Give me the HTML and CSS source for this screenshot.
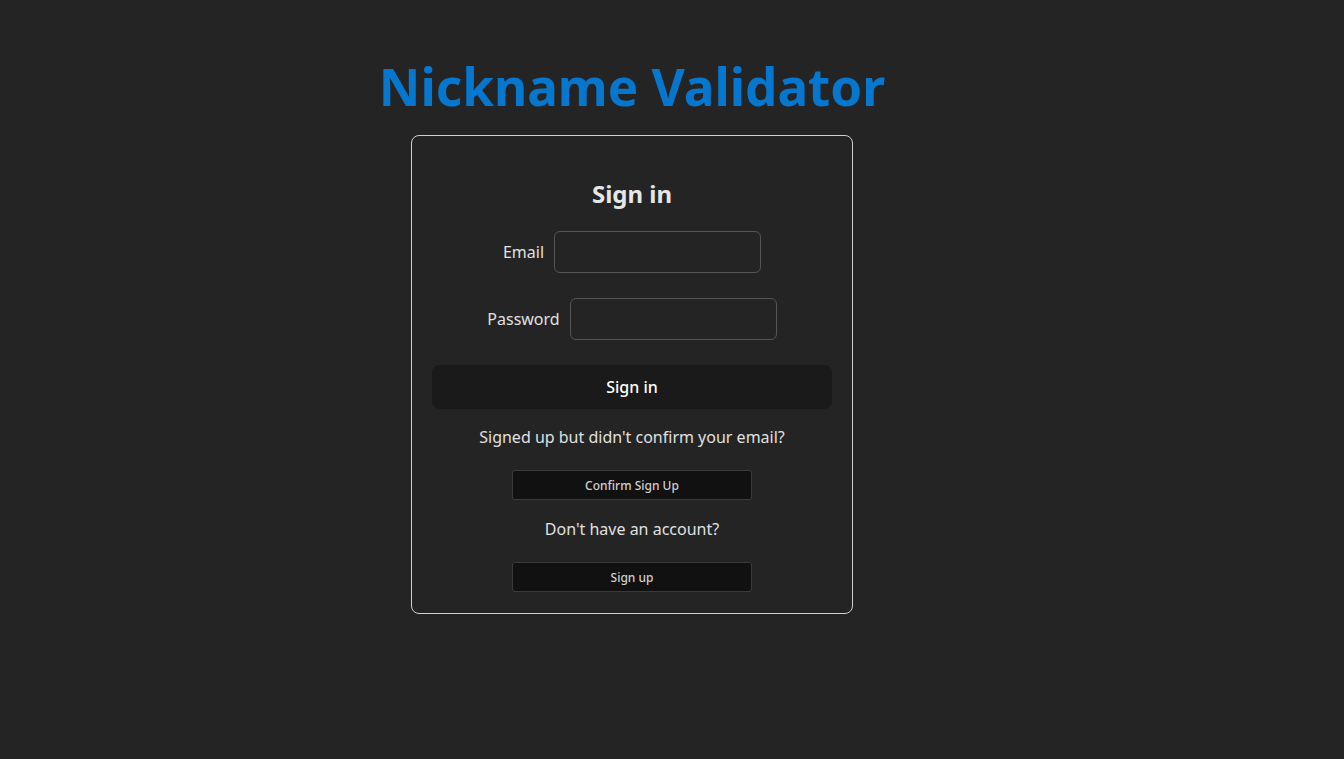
FILE: index.html
```html
<!DOCTYPE html>
<html lang="en">
<head>
<meta charset="utf-8">
<title>Nickname Validator</title>
<link rel="stylesheet" href="styles.css">
</head>
<body>
<div class="page">
  <h1 class="title">Nickname Validator</h1>
  <div class="card">
    <h2 class="card-title">Sign in</h2>
    <div class="field">
      <label class="label" for="email">Email</label>
      <input class="input" id="email" type="email">
    </div>
    <div class="field">
      <label class="label" for="password">Password</label>
      <input class="input" id="password" type="password">
    </div>
    <button class="btn-primary">Sign in</button>
    <p class="note">Signed up but didn't confirm your email?</p>
    <button class="btn-small">Confirm Sign Up</button>
    <p class="note note-2">Don't have an account?</p>
    <button class="btn-small btn-last">Sign up</button>
  </div>
</div>
</body>
</html>
```
FILE: styles.css
```css
html, body {
  margin: 0;
  padding: 0;
  background: #242424;
  color: rgba(255, 255, 255, 0.87);
  font-family: "Noto Sans", "Open Sans", sans-serif;
  font-size: 16px;
  line-height: 1.5;
}

.page {
  width: 1264px;
  display: flex;
  flex-direction: column;
  align-items: center;
  padding-top: 58px;
}

.title {
  margin: 0 0 21px;
  font-size: 51.2px;
  line-height: 1.1;
  font-weight: 700;
  color: #0677cf;
}

.card {
  width: 400px;
  padding: 20px;
  border: 1px solid #d0d0d0;
  border-radius: 8px;
  display: flex;
  flex-direction: column;
  align-items: center;
}

.card-title {
  margin: 20px 0 19px;
  font-size: 24px;
  line-height: 36px;
  font-weight: 700;
  color: #e6e6e6;
}

.field {
  display: flex;
  align-items: center;
  gap: 10px;
  margin-bottom: 25px;
}

.label {
  font-size: 16px;
  color: #e0e0e0;
}

.input {
  box-sizing: border-box;
  width: 207px;
  height: 42px;
  background: #242424;
  border: 1px solid #555;
  border-radius: 6px;
  color: #fff;
  font-family: inherit;
  font-size: 16px;
  padding: 0 10px;
}

.btn-primary {
  box-sizing: border-box;
  width: 400px;
  height: 44px;
  border: 1px solid transparent;
  border-radius: 8px;
  background: #1a1a1a;
  color: #fff;
  font-family: inherit;
  font-size: 16px;
  font-weight: 500;
}

.note {
  margin: 16px 0 21px;
  font-size: 16px;
  line-height: 24px;
  color: #e0e0e0;
}

.note-2 {
  margin: 17px 0 21px;
}

.btn-small {
  box-sizing: border-box;
  width: 240px;
  height: 30px;
  border: 1px solid #3a3a3a;
  border-radius: 3px;
  background: #111;
  color: #cfcfcf;
  font-family: inherit;
  font-size: 12px;
  font-weight: 500;
}

.btn-last {
  margin-bottom: 1px;
}
```
